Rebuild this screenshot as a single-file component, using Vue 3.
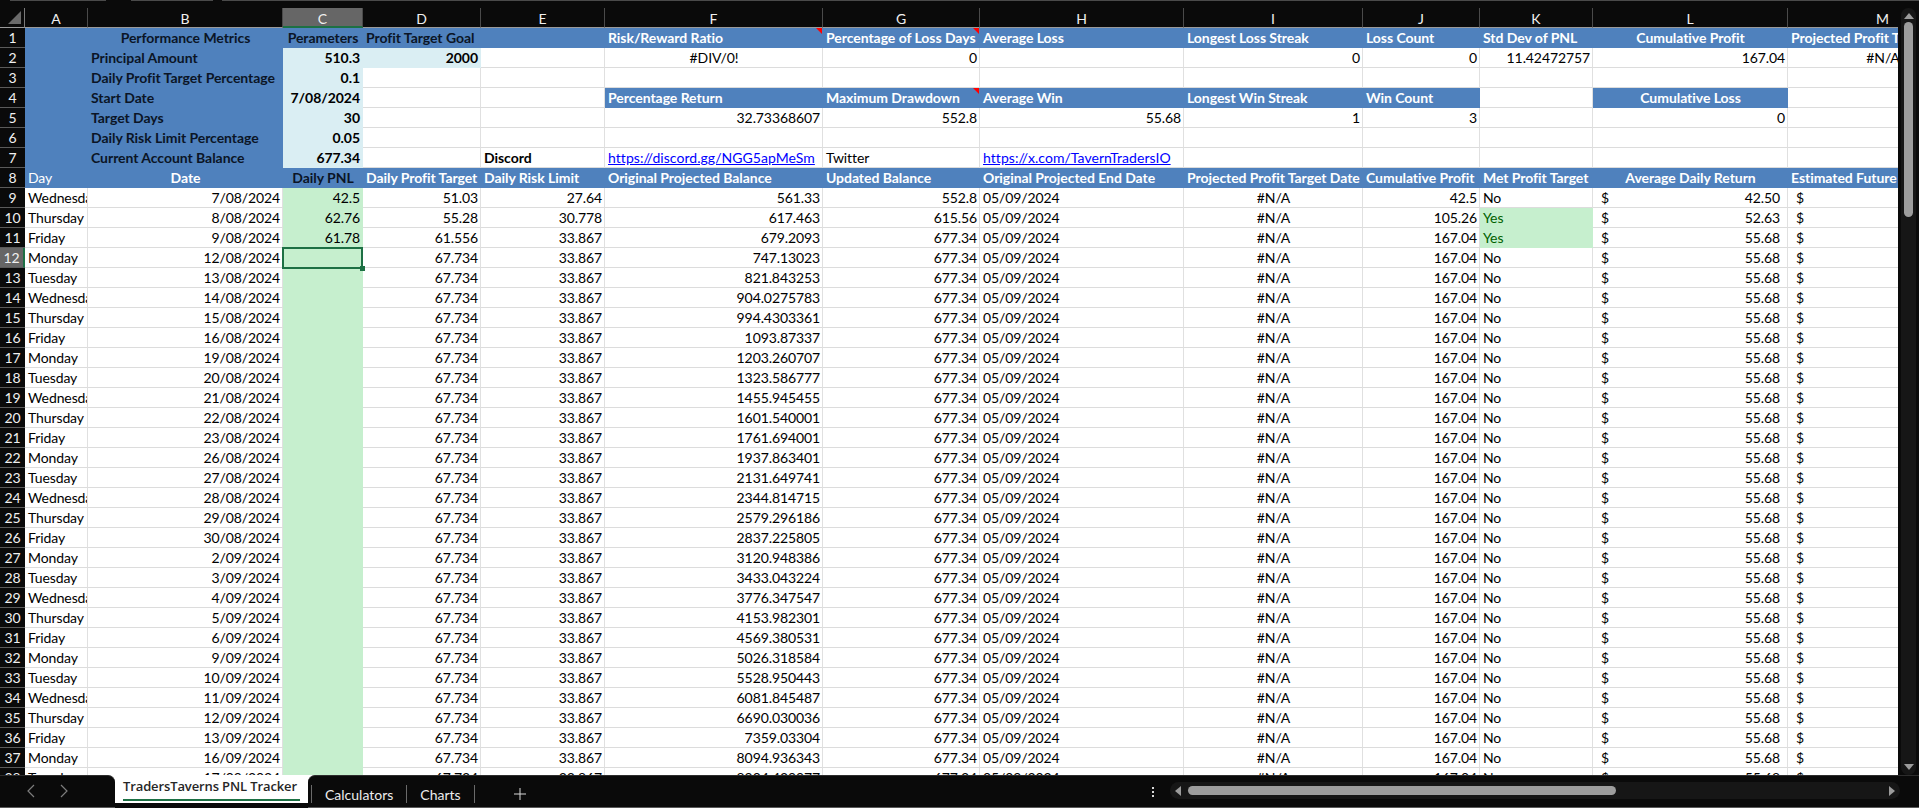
<script setup>
const letters = ['A','B','C','D','E','F','G','H','I','J','K','L','M']
const c = (t = '', cls = '') => ({ t, cls })
const EMPTY = () => c()
const blue = (t = '', cls = '') => c(t, 'blue ' + cls)
const hd = (t, cls = '') => c(t, 'blue white b ' + cls)
const dk = (t, cls = '') => c(t, 'blue b ' + cls)
const r = t => c(String(t), 'right')
const lt = (t) => c(t, 'light b right')

const top = [
  [blue(), dk('Performance Metrics','center'), dk('Perameters','center'), dk('Profit Target Goal'), blue(), hd('Risk/Reward Ratio','flag'), hd('Percentage of Loss Days','flag'), hd('Average Loss'), hd('Longest Loss Streak'), hd('Loss Count'), hd('Std Dev of PNL'), hd('Cumulative Profit','center'), hd('Projected Profit Target Date')],
  [blue(), dk('Principal Amount'), lt('510.3'), lt('2000'), EMPTY(), c('#DIV/0!','center'), r(0), EMPTY(), r(0), r(0), r('11.42472757'), r('167.04'), c('#N/A','center')],
  [blue(), dk('Daily Profit Target Percentage'), lt('0.1'), EMPTY(), EMPTY(), EMPTY(), EMPTY(), EMPTY(), EMPTY(), EMPTY(), EMPTY(), EMPTY(), EMPTY()],
  [blue(), dk('Start Date'), lt('7/08/2024'), EMPTY(), EMPTY(), hd('Percentage Return'), hd('Maximum Drawdown','flag'), hd('Average Win'), hd('Longest Win Streak'), hd('Win Count'), EMPTY(), hd('Cumulative Loss','center'), EMPTY()],
  [blue(), dk('Target Days'), lt('30'), EMPTY(), EMPTY(), r('32.73368607'), r('552.8'), r('55.68'), r(1), r(3), EMPTY(), r(0), EMPTY()],
  [blue(), dk('Daily Risk Limit Percentage'), lt('0.05'), EMPTY(), EMPTY(), EMPTY(), EMPTY(), EMPTY(), EMPTY(), EMPTY(), EMPTY(), EMPTY(), EMPTY()],
  [blue(), dk('Current Account Balance'), lt('677.34'), EMPTY(), c('Discord','b'), c('https://discord.gg/NGG5apMeSm','link'), c('Twitter'), c('https://x.com/TavernTradersIO','link'), EMPTY(), EMPTY(), EMPTY(), EMPTY(), EMPTY()],
  [blue('Day','white'), hd('Date','center'), dk('Daily PNL','center'), hd('Daily Profit Target'), hd('Daily Risk Limit'), hd('Original Projected Balance'), hd('Updated Balance'), hd('Original Projected End Date'), hd('Projected Profit Target Date'), hd('Cumulative Profit'), hd('Met Profit Target'), hd('Average Daily Return','center'), hd('Estimated Future Balance')]
]

const days = [
  ['Wednesday','7/08/2024'],['Thursday','8/08/2024'],['Friday','9/08/2024'],['Monday','12/08/2024'],['Tuesday','13/08/2024'],
  ['Wednesday','14/08/2024'],['Thursday','15/08/2024'],['Friday','16/08/2024'],['Monday','19/08/2024'],['Tuesday','20/08/2024'],
  ['Wednesday','21/08/2024'],['Thursday','22/08/2024'],['Friday','23/08/2024'],['Monday','26/08/2024'],['Tuesday','27/08/2024'],
  ['Wednesday','28/08/2024'],['Thursday','29/08/2024'],['Friday','30/08/2024'],['Monday','2/09/2024'],['Tuesday','3/09/2024'],
  ['Wednesday','4/09/2024'],['Thursday','5/09/2024'],['Friday','6/09/2024'],['Monday','9/09/2024'],['Tuesday','10/09/2024'],
  ['Wednesday','11/09/2024'],['Thursday','12/09/2024'],['Friday','13/09/2024'],['Monday','16/09/2024'],['Tuesday','17/09/2024']
]
const projected = ['561.33','617.463','679.2093','747.13023','821.843253','904.0275783','994.4303361','1093.87337','1203.260707','1323.586777','1455.945455','1601.540001','1761.694001','1937.863401','2131.649741','2344.814715','2579.296186','2837.225805','3120.948386','3433.043224','3776.347547','4153.982301','4569.380531','5026.318584','5528.950443','6081.845487','6690.030036','7359.03304','8094.936343','8904.429977']
const pnl = ['42.5','62.76','61.78']
const target = ['51.03','55.28','61.556']
const risk = ['27.64','30.778','33.867']
const updated = ['552.8','615.56','677.34']
const cumul = ['42.5','105.26','167.04']
const avg = ['42.50','52.63','55.68']
const met = ['No','Yes','Yes']

const body = days.map(([d, date], i) => [
  c(d),
  r(date),
  c(pnl[i] || '', 'green right' + (i === 3 ? ' selected' : '')),
  r(target[i] || '67.734'),
  r(risk[i] || '33.867'),
  r(projected[i]),
  r(updated[i] || '677.34'),
  c('05/09/2024'),
  c('#N/A', 'center'),
  r(cumul[i] || '167.04'),
  c(met[i] || 'No', met[i] === 'Yes' ? 'green yes' : ''),
  c(avg[i] || '55.68', 'money'),
  c('', 'money')
])

const rows = [...top, ...body]
</script>

<template>
  <div class="app">
    <div class="topstrip">
      <span class="seg seg1"></span>
      <span class="seg seg2"></span>
      <span class="seg seg3"></span>
    </div>
    <div class="work">
      <div class="sheet">
        <div class="corner">
          <svg width="13" height="13" viewBox="0 0 13 13"><polygon points="13,0 13,13 0,13" fill="#6a6a6a" /></svg>
        </div>
        <div v-for="l in letters" :key="l" class="colhead" :class="{ active: l === 'C' }">{{ l }}</div>
        <template v-for="(row, i) in rows" :key="i">
          <div class="rowhead" :class="{ active: i === 11 }">{{ i + 1 }}</div>
          <div v-for="(cell, j) in row" :key="j" class="cell" :class="cell.cls">
            <template v-if="cell.cls.includes('money')">
              <span>$</span><span>{{ cell.t }}</span>
            </template>
            <template v-else>{{ cell.t }}</template>
          </div>
        </template>
      </div>
      <div class="vscroll">
        <svg class="arrow" width="10" height="6" viewBox="0 0 10 6"><polygon points="5,0 10,6 0,6" fill="#9b9b9b" /></svg>
        <div class="vtrack"><div class="vthumb"></div></div>
        <svg class="arrow" width="10" height="6" viewBox="0 0 10 6"><polygon points="0,0 10,0 5,6" fill="#9b9b9b" /></svg>
      </div>
    </div>
    <div class="tabbar">
      <div class="nav">
        <svg width="8" height="14" viewBox="0 0 8 14"><polyline points="7,1 1,7 7,13" fill="none" stroke="#7d7d7d" stroke-width="1.2" /></svg>
        <svg width="8" height="14" viewBox="0 0 8 14"><polyline points="1,1 7,7 1,13" fill="none" stroke="#7d7d7d" stroke-width="1.2" /></svg>
      </div>
      <div class="tab-active"><span>TradersTaverns PNL Tracker</span></div>
      <div class="rest">
        <div class="tabs">
          <span class="sep"></span>
          <span class="tab">Calculators</span>
          <span class="sep"></span>
          <span class="tab">Charts</span>
          <span class="sep"></span>
          <svg class="plus" width="12" height="12" viewBox="0 0 12 12"><path d="M6 0V12M0 6H12" stroke="#d8d8d8" stroke-width="1" fill="none" /></svg>
        </div>
        <div class="dots"><i></i><i></i><i></i></div>
        <div class="htrack">
          <svg width="6" height="10" viewBox="0 0 6 10"><polygon points="6,0 6,10 0,5" fill="#9b9b9b" /></svg>
          <div class="hlane"><div class="hthumb"></div></div>
          <svg width="6" height="10" viewBox="0 0 6 10"><polygon points="0,0 6,5 0,10" fill="#9b9b9b" /></svg>
        </div>
      </div>
    </div>
  </div>
</template>

<style scoped>
.app {
  width: 1919px;
  height: 808px;
  display: flex;
  flex-direction: column;
  background: #0a0a0a;
  overflow: hidden;
  font-family: Lato, "Open Sans", sans-serif;
  font-size: 14px;
  color: #000;
}
.topstrip {
  height: 8px;
  flex: none;
  display: flex;
  gap: 9px;
  padding-left: 10px;
}
.seg { height: 1px; background: #4a4a4a; }
.seg1 { width: 96px; margin-right: 16px; }
.seg2 { width: 82px; }
.seg3 { flex: 1; }
.work { flex: none; height: 767px; display: flex; }
.sheet {
  flex: none;
  width: 1898px;
  overflow: hidden;
  background: #0a0a0a;
  display: grid;
  grid-template-columns: 25px 63px 195px 80px 118px 124px 218px 157px 204px 179px 117px 113px 195px 190px;
  grid-auto-rows: 20px;
  align-content: start;
}
.corner {
  display: flex;
  align-items: flex-end;
  justify-content: flex-end;
  padding: 0 3px 3px 0;
  border-bottom: 1px solid #9a9a9a;
  border-right: 1px solid #7a7a7a;
  box-sizing: border-box;
}
.colhead {
  box-sizing: border-box;
  border-right: 1px solid #4a4a4a;
  border-bottom: 1px solid #9a9a9a;
  color: #f0f0f0;
  display: flex;
  align-items: center;
  justify-content: center;
  padding-top: 2px;
}
.colhead.active {
  background: #666;
  border-bottom: 2px solid #1d7044;
}
.rowhead {
  box-sizing: border-box;
  color: #f0f0f0;
  border-bottom: 1px solid #5a5a5a;
  display: flex;
  align-items: center;
  justify-content: center;
  letter-spacing: -0.2px;
}
.rowhead.active {
  background: #666;
  border-right: 2px solid #1d7044;
}
.cell {
  box-sizing: border-box;
  background: #fff;
  border-right: 1px solid #e0e0e0;
  border-bottom: 1px solid #dcdcdc;
  padding: 0 2px 0 3px;
  line-height: 19px;
  white-space: nowrap;
  overflow: hidden;
  letter-spacing: -0.1px;
  position: relative;
}
.right { text-align: right; }
.center { text-align: center; }
.b { font-weight: 700; letter-spacing: -0.05px; }
.blue { background: #4f81bd; border-color: #4f81bd; color: #0b1526; }
.white { color: #fff; }
.light { background: #daeef3; border-color: #daeef3; }
.green { background: #c6efce; border-color: #c6efce; }
.yes { color: #006100; }
.link { color: #0000ff; text-decoration: underline; letter-spacing: 0.05px; }
.money {
  display: flex;
  justify-content: space-between;
  padding: 0 7px 0 8px;
}
.flag::after {
  content: "";
  position: absolute;
  top: 0;
  right: 0;
  border-top: 6px solid #ff0000;
  border-left: 6px solid transparent;
}
.selected { overflow: visible; }
.selected::before {
  content: "";
  position: absolute;
  inset: -1px -1px -2px -1px;
  border: 2px solid #1d7044;
  z-index: 2;
}
.selected::after {
  content: "";
  position: absolute;
  right: -3px;
  bottom: -4px;
  width: 5px;
  height: 5px;
  background: #1d7044;
  z-index: 3;
}
.vscroll {
  flex: none;
  width: 15px;
  margin: 0 3px;
  background: #161616;
  border-radius: 8px;
  display: flex;
  flex-direction: column;
  align-items: center;
  padding: 5px 0;
  box-sizing: border-box;
  gap: 3px;
}
.arrow { flex: none; }
.vtrack { flex: 1; width: 9px; }
.vthumb { width: 9px; height: 195px; background: #9d9d9d; border-radius: 5px; }
.tabbar {
  flex: none;
  height: 33px;
  display: flex;
  background: #fff;
}
.nav {
  flex: none;
  width: 115px;
  background: #0a0a0a;
  border-top: 1px solid #2d2d2d;
  border-bottom: 1px solid #5a5a5a;
  box-sizing: border-box;
  border-top-right-radius: 7px;
  display: flex;
  gap: 25px;
  padding: 8px 0 0 27px;
  align-items: flex-start;
}
.tab-active {
  flex: none;
  width: 193px;
  box-sizing: border-box;
  background: linear-gradient(#fff 28px, #0a0a0a 28px);
  padding: 2px 8px 0;
  font-size: 14px;
  font-weight: 500;
  color: #262626;
  letter-spacing: -0.1px;
}
.tab-active span {
  display: block;
  height: 22px;
  line-height: 19px;
  border-bottom: 2px solid #1d7044;
  white-space: nowrap;
  font-family: "Open Sans", sans-serif;
  font-weight: 600;
  font-size: 13px;
  letter-spacing: -0.12px;
}
.rest {
  flex: 1;
  background: #0a0a0a;
  border-top: 1px solid #2d2d2d;
  border-bottom: 1px solid #5a5a5a;
  box-sizing: border-box;
  border-top-left-radius: 7px;
  display: flex;
  align-items: flex-start;
}
.tabs {
  flex: none;
  width: 834px;
  display: flex;
  align-items: center;
  height: 24px;
  padding: 6px 0 0 3px;
  box-sizing: content-box;
  color: #ededed;
}
.sep { width: 1px; height: 18px; background: #6a6a6a; }
.tab { padding: 0 13px; font-size: 14px; white-space: nowrap; }
.plus { margin-left: 39px; }
.dots {
  flex: none;
  width: 16px;
  margin: 11px 9px 0 0;
  display: flex;
  flex-direction: column;
  align-items: center;
  gap: 2px;
}
.dots i { width: 2px; height: 2px; background: #d8d8d8; }
.htrack {
  flex: none;
  width: 730px;
  height: 17px;
  margin-top: 6px;
  background: #161616;
  border-radius: 9px;
  display: flex;
  align-items: center;
  box-sizing: border-box;
  padding: 0 5px;
  gap: 2px;
}
.hlane { flex: 1; }
.hthumb { width: 428px; height: 9px; margin-left: 5px; background: #9d9d9d; border-radius: 5px; }
</style>
